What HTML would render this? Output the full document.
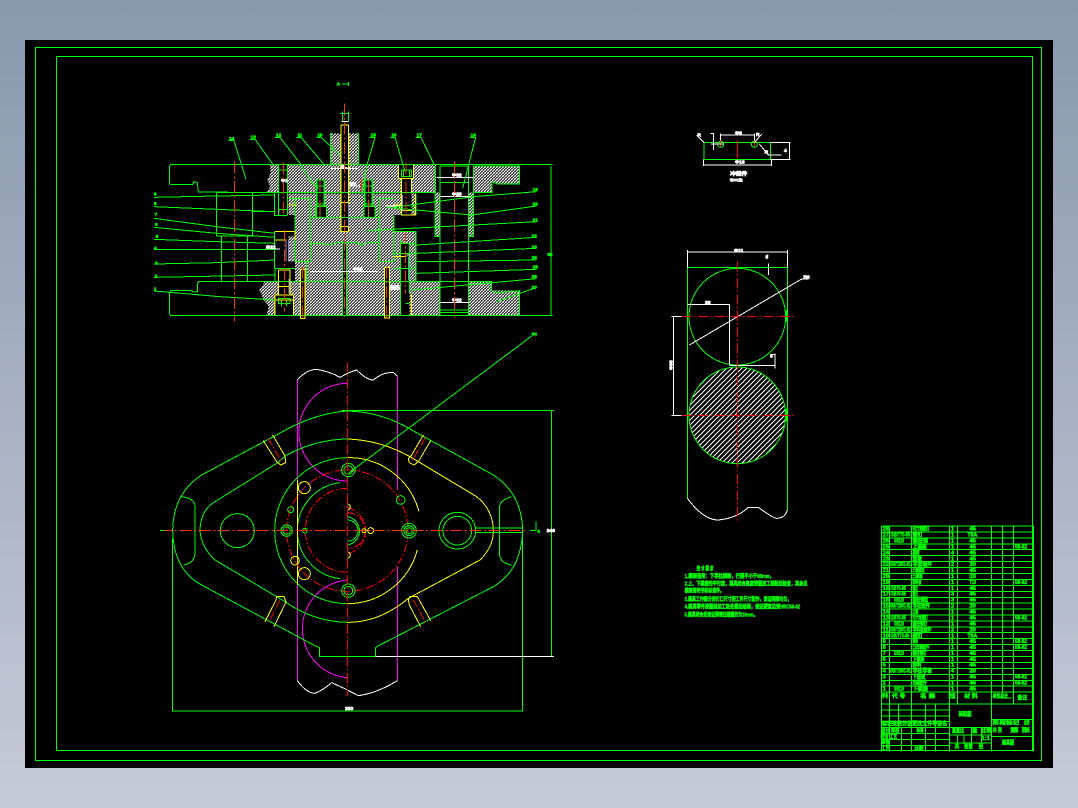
<!DOCTYPE html>
<html><head><meta charset="utf-8">
<style>
html,body{margin:0;padding:0;width:1078px;height:808px;overflow:hidden;background:linear-gradient(180deg,#8898ae 0%,#c6cad7 100%);}
svg{position:absolute;left:0;top:0;display:block}
text{font-family:"Liberation Sans","Noto Sans CJK SC",sans-serif;}
.g{fill:none;stroke:#0f0;stroke-width:3}
.y{fill:none;stroke:#ff0;stroke-width:3}
.w{fill:none;stroke:#fff;stroke-width:3}
.m{fill:none;stroke:#f0f;stroke-width:3}
.r{fill:none;stroke:#f30;stroke-width:3;stroke-dasharray:36 8 6 8}
.rr{fill:none;stroke:#f00;stroke-width:3;stroke-dasharray:24 6 5 6}
.bk{fill:#000;stroke:none}
.h{fill:url(#hx);stroke:none}
.lw{fill:#fff;stroke:#fff;stroke-width:2;font-size:15px;font-weight:bold}
.lg{fill:#0f0;stroke:#0f0;stroke-width:1.5;font-size:14px;font-weight:bold}
.tb text{fill:#0f0;stroke:#0f0;stroke-width:1.3;font-size:17px;font-weight:bold}
</style></head><body>
<svg width="1078" height="808" viewBox="0 0 1078 808" xmlns="http://www.w3.org/2000/svg" shape-rendering="crispEdges">
<defs>
<pattern id="hx" patternUnits="userSpaceOnUse" width="9" height="9">
<rect width="9" height="9" fill="#000"/>
<path d="M-1 10L10 -1M-1 1L1 -1M8 10L10 8" stroke="#fff" stroke-width="3"/>
<path d="M0 0L9 9" stroke="#fff" stroke-width="1.5"/>
</pattern>
<pattern id="hd" patternUnits="userSpaceOnUse" width="15" height="15">
<rect width="15" height="15" fill="#000"/>
<path d="M-1 16L16 -1M-1 1L1 -1M14 16L16 14" stroke="#fff" stroke-width="3"/>
</pattern>
</defs>
<rect x="25" y="40" width="1028" height="728" fill="#000"/>
<rect x="35.5" y="47.5" width="1006" height="713" fill="none" stroke="#0f0"/>
<rect x="56.5" y="56.5" width="976" height="694" fill="none" stroke="#0f0"/>

<!-- SECTION VIEW -->
<g transform="translate(140 80) scale(.33333)">
<path class="h" d="M390 255L415 255 415 338 378 338 390 320 382 298 392 280Z"/>
<path class="h" d="M443 255L572 255 572 338 443 338Z"/>
<path class="h" d="M572 168Q572 160 580 160L648 160Q655 160 655 168L655 338 572 338Z"/>
<path class="h" d="M655 255L775 255 775 295 785 295 785 338 655 338Z"/>
<path class="h" d="M820 255L888 255 888 338 815 338 815 295 820 295Z"/>
<path class="h" d="M1000 258L1138 258 1138 312 1072 312 1056 305 1056 338 1000 338Z"/>
<path class="h" d="M885 338L900 338 900 470 885 470ZM985 338L1000 338 1000 470 985 470Z"/>
<path class="h" d="M445 340L828 340 828 405 762 405 762 545 465 545 465 405 445 405Z"/>
<path class="h" d="M358 630L375 605 900 605 900 705 380 705 386 680 372 660Z"/>
<path class="h" d="M985 605L1055 605 1055 632 1070 632 1138 632 1138 705 985 705Z"/>
<path class="h" d="M465 545L828 545 828 605 465 605ZM762 455L828 455 828 545 762 545Z"/>
<path class="h" d="M445 470L465 470 465 545 445 545Z"/>
<!-- holes -->
<rect class="bk" x="415" y="255" width="28" height="150"/>
<rect class="bk" x="405" y="340" width="40" height="65"/>
<rect class="bk" x="603" y="95" width="23" height="360"/>
<rect class="bk" x="530" y="298" width="23" height="80"/>
<rect class="bk" x="674" y="298" width="23" height="80"/>
<rect class="bk" x="785" y="295" width="30" height="110"/>
<rect class="bk" x="775" y="255" width="45" height="40"/>
<rect class="bk" x="415" y="570" width="35" height="135"/>
<rect class="bk" x="405" y="645" width="55" height="60"/>
<rect class="bk" x="420" y="470" width="25" height="95"/>
<rect class="bk" x="482" y="568" width="13" height="148"/>
<rect class="bk" x="733" y="562" width="15" height="152"/>
<rect class="bk" x="782" y="490" width="26" height="215"/>
<rect class="bk" x="608" y="490" width="10" height="215"/>
<rect class="bk" x="527" y="380" width="33" height="32"/>
<rect class="bk" x="672" y="380" width="33" height="32"/>
<!-- outlines -->
<path class="g" d="M1238 253L95 253Q88 255 88 265L88 308Q90 314 95 314L158 314 162 305 172 308 175 336 405 338"/>
<path class="g" d="M405 605L178 604 172 610 172 635 160 636 155 632 92 632 88 640 88 700 92 707 1238 707"/>
<path class="g" d="M229 338H338V468H229ZM244 468V604M323 468V604M338 395H405"/>
<path class="g" d="M572 160V255M655 160V255M572 160H578M650 160H655M405 338H888M1000 338H1056V305L1072 312H1138V258M1000 258H1138"/>
<path class="g" stroke-width="4" d="M403 338V406H443M403 455V565M403 455H465M403 565H465M465 355V545H512V490M445 355H510M510 355V490M718 355V545H762V405M718 355H762M512 490H548L565 494 595 488 650 488 665 496 680 488 718 488M465 545H512M718 545H762"/>
<path class="g" d="M762 455H828V605H762M828 455V605M762 455V545M782 490H828M782 480V705M808 490V640M828 340V405M815 380H828M760 520H828"/>
<path class="g" d="M405 605H1000M985 605H1055V632L1070 638 1138 632V705M500 545V605M405 565V605M760 565H828"/>
<path class="g" d="M512 412H718M530 300H553V378H530ZM674 300H697V378H674ZM527 380H560V412H527ZM672 380H705V412H672ZM530 378V412M685 378V412M540 380V412M530 318H553M674 318H697"/>
<path class="g" stroke-width="5" d="M531 300V378M552 300V378M675 300V378M696 300V378M415 270H443M415 388H443M600 100H626M797 670H808M530 372H553M674 372H697"/>
<path class="g" d="M415 255V405M443 255V405"/>
<path class="g" d="M885 258V470H900M1000 258V470H985M900 258V705M985 258V705M900 258H985M900 307H985M900 690H985M900 697H985"/>
<path class="g" stroke-width="5" d="M900 258H985M808 580V640"/>
<path class="g" d="M785 270H815V290H785ZM790 270V290M808 270V290M415 655H450V670H415ZM425 658V680M440 658V680"/>
<path class="g" d="M608 95V125M626 95V125M620 490V705M607 490V705"/>
<!-- yellow -->
<path class="y" stroke-width="4" d="M603 135V455H626V135ZM603 368H626M605 440H624"/>
<path class="y" d="M415 570H450V645M415 570V645M415 620H450M405 645H460V705M405 645V705M405 660H460"/>
<path class="y" d="M405 455H465V480M405 480H440M445 375H470"/>
<path class="y" stroke-width="4" d="M482 568V716H495V568ZM733 562V714H748V562Z"/>
<path class="y" stroke-width="4" d="M775 255V295H820V255M785 295V405H827V340M785 392H815M815 295V340"/>
<path class="y" d="M815 640V705M760 375H785M760 530H800"/>
<path d="M438 480V545M445 480V545M447 595V640M625 370V440M787 345V395M806 530V600" fill="none" stroke="#88c" stroke-width="3"/>
<!-- white dims -->
<path class="w" d="M570 266H655M890 292H1000M900 350H990M900 668H988M510 575H715M375 507H420M800 525H810M625 318H660M735 378H785M750 628H780M604 125H626"/>
<path class="w" stroke-width="5" d="M606 262H622M906 350H914M978 350H988M902 668H914M976 668H988"/>
<text class="lw" x="936" y="290">Φ32</text><text class="lw" x="936" y="346">Φ28</text><text class="lw" x="936" y="664">Φ32</text>
<text class="lw" x="378" y="505">Φ22</text><text class="lw" x="639" y="572">Φ60</text><text class="lw" x="628" y="316">Φ7</text>
<text class="lw" x="423" y="306">Φ1</text><text class="lw" x="750" y="625">Φ25</text><text class="lw" x="603" y="264">Φ</text>
<!-- leaders -->
<path class="g" d="M42 352L230 348 405 345M42 380L230 388 405 395M42 415L230 440 405 460M42 442L230 460 405 472M42 478L230 485 405 490M42 508H405M42 552L230 548 405 540M42 592L405 585M42 633L240 650 405 660"/>
<path class="g" d="M1190 335L1000 350 760 382M1190 378L995 405 740 382M1190 425L680 452M1190 472L830 495M1190 505L830 520M1190 540L830 545M1190 568L830 580M1190 596L815 630M1190 622L1070 665"/>
<path class="g" d="M265 182H282L318 298M330 178H345L400 255M405 172H420L480 250 510 300 535 325M470 172H483L552 253M530 172H543L600 225M688 172H705L680 258 665 345M752 172H765L795 275M826 172H843L882 253M990 172H1007L968 325"/>
<text class="lg" x="267" y="180">14</text><text class="lg" x="332" y="176">13</text><text class="lg" x="408" y="170">12</text><text class="lg" x="472" y="170">11</text><text class="lg" x="532" y="170">10</text><text class="lg" x="692" y="170">15</text><text class="lg" x="754" y="170">16</text><text class="lg" x="830" y="170">17</text><text class="lg" x="992" y="170">18</text>
<text class="lg" x="42" y="347">9</text><text class="lg" x="42" y="375">8</text><text class="lg" x="44" y="408">7</text><text class="lg" x="45" y="438">6</text><text class="lg" x="47" y="474">5</text><text class="lg" x="42" y="508">4</text><text class="lg" x="45" y="553">3</text><text class="lg" x="44" y="592">2</text><text class="lg" x="42" y="632">1</text>
<text class="lg" x="1178" y="333">19</text><text class="lg" x="1178" y="376">20</text><text class="lg" x="1178" y="424">21</text><text class="lg" x="1175" y="472">22</text><text class="lg" x="1175" y="505">23</text><text class="lg" x="1175" y="537">24</text><text class="lg" x="1178" y="565">25</text><text class="lg" x="1175" y="594">26</text><text class="lg" x="1175" y="627">27</text>
<path class="g" d="M1233 258V705"/><text class="lg" x="1222" y="528">86</text>
<text class="lg" x="590" y="16">A</text><path class="g" d="M605 12H626M626 6V18"/>
<!-- centerlines -->
<path class="r" d="M283 245V725M430 248V410M433 450V695M613 70V710M685 300V415M540 300V415M798 248V410M797 455V640M740 560V720M488 560V718M943 245V712"/>
<path class="r" d="M665 298V340"/>
</g>

<!-- PLAN VIEW -->
<g transform="translate(160 330) scale(.33333)">
<path class="m" d="M412 150V1052M712 138V480M712 710V1052"/>
<path class="m" d="M562 160A145 146 0 0 0 562 453"/>
<path class="m" d="M562 750A147 147 0 0 0 562 1043"/>
<path class="w" d="M412 150Q440 118 470 118Q510 125 540 142Q570 125 590 120Q620 150 640 150Q670 125 700 128L712 138"/>
<path class="w" d="M412 1052Q440 1090 465 1090Q490 1080 515 1058Q555 1075 595 1097Q650 1090 712 1052"/>
<path class="g" d="M125 435L355 312Q460 250 562 243Q665 245 755 300L1000 435Q1085 490 1088 600Q1085 720 1000 770L650 950 646 955V980H478V952L470 950 125 765Q40 720 38 600Q40 490 125 435Z"/>
<path class="g" d="M350 400L165 515Q122 540 120 600Q122 650 165 690L375 815Q460 875 562 877M350 400L380 375Q470 328 562 327"/>
<path class="y" d="M562 327Q660 330 750 380L950 500Q1000 540 1000 605Q1000 650 960 690L745 805Q660 877 562 877"/>
<path class="g" d="M65 500Q105 505 105 530V670Q103 700 70 705M1055 500Q1018 510 1018 535V670Q1020 700 1055 705"/>
<circle class="g" cx="232" cy="602" r="51"/>
<circle class="g" cx="892" cy="602" r="55"/><circle class="g" cx="892" cy="602" r="43"/>
<path class="g" d="M562 383A218 219 0 0 0 562 821M540 458A145 145 0 0 0 540 746"/>
<path class="y" d="M562 383A218 218 0 0 1 777 545M772 660A218 218 0 0 1 562 821"/>
<path class="y" d="M412 450V765"/>
<circle class="rr" cx="562" cy="602" r="182"/>
<path class="rr" d="M562 475A125 125 0 0 0 562 727M562 532A72 72 0 0 1 562 672M562 548A54 54 0 0 1 562 656"/>
<path class="g" d="M562 560A43 43 0 0 1 562 645M562 570A32 32 0 0 1 562 634"/>
<path class="y" stroke-width="5" d="M338 315L375 378M310 332L350 395M790 315L752 380M812 332L775 395M315 875L348 810M342 890L375 822M782 890L748 825M812 872L775 805"/>
<path class="y" d="M350 395L362 405 377 398 375 378M752 380L745 385 748 398 762 405 775 395M348 810L350 800 372 800 378 815 375 822M748 825L745 808 750 800 772 800 778 810"/>
<path class="rr" d="M325 325L365 395M795 325L755 395M360 810L325 880M760 810L798 880"/>
<circle class="y" stroke-width="4" cx="433" cy="473" r="18"/><circle class="y" stroke-width="4" cx="405" cy="692" r="13"/><circle class="y" stroke-width="4" cx="433" cy="731" r="18"/>
<circle class="g" stroke-width="4" cx="392" cy="539" r="9"/><circle class="g" stroke-width="4" cx="722" cy="510" r="13"/><circle class="g" stroke-width="4" cx="435" cy="602" r="7"/>
<circle class="g" stroke-width="4" cx="380" cy="602" r="17"/><circle class="g" cx="380" cy="602" r="11"/>
<circle class="g" stroke-width="4" cx="747" cy="602" r="22"/><circle class="g" cx="747" cy="602" r="15"/><circle class="g" cx="747" cy="602" r="9"/>
<circle class="g" stroke-width="4" cx="565" cy="420" r="20"/><circle class="g" cx="565" cy="420" r="13"/><circle class="g" stroke-width="4" cx="565" cy="782" r="20"/><circle class="g" cx="565" cy="782" r="13"/>
<circle class="y" stroke-width="4" cx="612" cy="602" r="6"/><circle class="y" stroke-width="4" cx="632" cy="602" r="9"/>
<path class="y" stroke-width="4" d="M562 522A9 9 0 0 1 562 540M562 666A9 9 0 0 1 562 684"/>
<path class="g" d="M945 594H1088M945 608H1088M38 625V1145M1088 610V1145M38 1143H1088M545 242H1182M1175 242V978"/>
<path class="w" d="M646 980H1182"/>
<path class="g" d="M565 430L1115 18"/>
<path class="r" d="M0 602H1100"/>
<path d="M562 98V1100" fill="none" stroke="#f00" stroke-width="3" stroke-dasharray="30 7 5 7"/>
<path class="g" d="M0 602H14M1110 602H1128V575"/>
<text class="lg" x="1115" y="16">34</text>
<text class="lw" x="1132" y="607" style="font-size:11px;fill:#0f0;stroke:#0f0">A</text>
<text class="lw" x="1160" y="606">240</text>
<text class="lw" x="555" y="1140">350</text>
</g>

<!-- RIGHT VIEWS -->
<g transform="translate(660 120) scale(.33333)">
<path class="g" stroke-width="7" d="M132 68H332M132 68V118M332 68V118"/>
<path class="g" d="M132 118H332"/>
<circle class="g" stroke-width="2" cx="283" cy="73" r="9"/><circle class="g" stroke-width="2" cx="182" cy="73" r="9"/>
<path d="M182 60V80M283 60V80M232 62V115" fill="none" stroke="#f00" stroke-width="3"/>
<path class="w" d="M130 118V138M335 118V138M130 135H335M182 40V62M283 40V62M182 45H283M332 68H392M332 118H392M388 68V118M160 40V90M152 40H162M110 45L132 68M305 42L283 68M298 72L325 105H365M153 72H190"/>
<text class="lw" x="225" y="44">Φ8</text><text class="lw" x="225" y="130">Φ16</text><text class="lw" x="372" y="96">4</text>
<text class="lw" x="112" y="50">R</text><text class="lw" x="288" y="48">R</text><text class="lw" x="314" y="100">R</text>
<text class="lw" x="210" y="167" textLength="52" lengthAdjust="spacingAndGlyphs">冲裁件</text><text class="lw" x="210" y="185" textLength="38" lengthAdjust="spacingAndGlyphs">t=2</text>
<path class="g" d="M82 390V1135M382 442V1170M82 442H382"/>
<path class="g" stroke-width="5" d="M205 443H262M380 570V605M380 865V905M213 737H265"/>
<circle class="g" cx="232" cy="590" r="145"/>
<circle cx="232" cy="886" r="145" fill="url(#hd)" stroke="#0f0" stroke-width="3"/>
<path class="w" d="M88 675L425 477H445M82 553H208V735M82 396H382M82 390V442M382 390V442M320 405H326M326 430V465"/>
<path class="w" stroke-width="5" d="M208 737H345"/>
<path class="w" d="M345 700V745M330 703H345M40 590V886M35 590H65M35 886H65"/>
<path class="w" d="M82 1135Q130 1200 175 1200Q230 1195 265 1162L295 1162Q340 1195 350 1195Q375 1195 382 1170"/>
<text class="lw" x="222" y="396">Φ11</text><text class="lw" x="430" y="475">R6</text><text class="lw" x="135" y="552">38</text>
<text class="lw" x="316" y="415">3</text><text class="lw" x="330" y="712">3</text>
<text class="lw" transform="translate(37 750) rotate(-90)">Φ98</text>
<path d="M65 590H402M65 886H402" fill="none" stroke="#f00" stroke-width="3" stroke-dasharray="30 7 5 7"/>
<path d="M232 425V1208" fill="none" stroke="#f00" stroke-width="3" stroke-dasharray="30 7 5 7"/>
</g>

<!-- NOTES -->
<g class="tb" transform="translate(670 555) scale(.33333)">
<text x="80" y="47" textLength="50" lengthAdjust="spacingAndGlyphs">技 术 要 求</text>
<text x="44" y="69" textLength="268" lengthAdjust="spacingAndGlyphs">1.模架选用：下导柱模架，行程不小于80mm，</text>
<text x="44" y="91" textLength="368" lengthAdjust="spacingAndGlyphs">2.上、下模座的平行度，模具闭合高度按图加工装配后检查，其余见</text>
<text x="44" y="113" textLength="118" lengthAdjust="spacingAndGlyphs">模架说明书和标准件。</text>
<text x="44" y="138" textLength="320" lengthAdjust="spacingAndGlyphs">3.模具工作部分的刃口尺寸按工件尺寸配作，保证间隙均匀，</text>
<text x="44" y="160" textLength="346" lengthAdjust="spacingAndGlyphs">4.模具零件按图纸加工热处理后组装，保证硬度达到HRC58-62</text>
<text x="44" y="184" textLength="218" lengthAdjust="spacingAndGlyphs">5.模具闭合后保证弹簧压缩量约为10mm。</text>
</g>

<!-- TITLE BLOCK -->
<g class="tb" transform="translate(870 520) scale(.33333)">
<path class="g" d="M34 18V694M490 18V694M34 18H490M34 36H490M34 54H490M34 72H490M34 89H490M34 107H490M34 125H490M34 143H490M34 161H490M34 178H490M34 196H490M34 214H490M34 232H490M34 249H490M34 267H490M34 285H490M34 303H490M34 321H490M34 338H490M34 356H490M34 374H490M34 392H490M34 409H490M34 427H490M34 445H490M34 463H490M34 481H490M34 498H490M34 516H490M34 552H490"/>
<path class="g" d="M58 18V552M125 18V552M238 18V694M262 18V552M364 18V694M397 18V516M430 18V552"/>
<path class="g" d="M34 570H238M34 588H238M34 605H238M34 623H364M34 640H238M34 658H238M34 676H238M58 552V694M85 552V623M125 552V623M166 552V623M196 552V623M95 623V694M125 623V694M166 623V694M196 623V694M238 645H364M238 669H364M262 645V669M282 645V669M304 623V669M334 623V669M364 598H490M364 649H490M380 534H425"/>
<text x="38" y="32">28</text><text x="128" y="32" textLength="50" lengthAdjust="spacingAndGlyphs">内六角螺钉</text><text x="243" y="32">1</text><text x="298" y="32" textLength="20" lengthAdjust="spacingAndGlyphs">45</text>
<text x="38" y="50">27</text><text x="62" y="50" textLength="58" lengthAdjust="spacingAndGlyphs">GB/T70-85</text><text x="128" y="50" textLength="30" lengthAdjust="spacingAndGlyphs">螺钉</text><text x="243" y="50">1</text><text x="292" y="50" textLength="30" lengthAdjust="spacingAndGlyphs">T8A</text>
<text x="38" y="67">26</text><text x="72" y="67" textLength="30" lengthAdjust="spacingAndGlyphs">GB119</text><text x="128" y="67" textLength="46" lengthAdjust="spacingAndGlyphs">圆柱销</text><text x="243" y="67">1</text><text x="298" y="67" textLength="20" lengthAdjust="spacingAndGlyphs">45</text>
<text x="38" y="85">25</text><text x="128" y="85" textLength="42" lengthAdjust="spacingAndGlyphs">上模座</text><text x="243" y="85">1</text><text x="298" y="85" textLength="20" lengthAdjust="spacingAndGlyphs">45</text><text x="435" y="85" textLength="36" lengthAdjust="spacingAndGlyphs">58-62</text>
<text x="38" y="103">24</text><text x="128" y="103" textLength="20" lengthAdjust="spacingAndGlyphs">模柄</text><text x="243" y="103">4</text><text x="298" y="103" textLength="20" lengthAdjust="spacingAndGlyphs">45</text>
<text x="38" y="121">23</text><text x="128" y="121" textLength="28" lengthAdjust="spacingAndGlyphs">垫板</text><text x="243" y="121">1</text><text x="298" y="121" textLength="20" lengthAdjust="spacingAndGlyphs">45</text>
<text x="38" y="138">22</text><text x="60" y="138" textLength="62" lengthAdjust="spacingAndGlyphs">GB/T2861-81</text><text x="128" y="138" textLength="58" lengthAdjust="spacingAndGlyphs">导套组件</text><text x="243" y="138">2</text><text x="298" y="138" textLength="20" lengthAdjust="spacingAndGlyphs">20</text>
<text x="38" y="156">21</text><text x="128" y="156" textLength="36" lengthAdjust="spacingAndGlyphs">凸模固定</text><text x="243" y="156">1</text><text x="298" y="156" textLength="20" lengthAdjust="spacingAndGlyphs">45</text>
<text x="38" y="174">20</text><text x="128" y="174" textLength="30" lengthAdjust="spacingAndGlyphs">凸模板</text><text x="243" y="174">1</text><text x="298" y="174" textLength="20" lengthAdjust="spacingAndGlyphs">Q35</text>
<text x="38" y="192">19</text><text x="128" y="192" textLength="26" lengthAdjust="spacingAndGlyphs">卸料板</text><text x="243" y="192">1</text><text x="298" y="192" textLength="20" lengthAdjust="spacingAndGlyphs">T10</text><text x="435" y="192" textLength="36" lengthAdjust="spacingAndGlyphs">58-62</text>
<text x="38" y="210">18</text><text x="62" y="210" textLength="46" lengthAdjust="spacingAndGlyphs">GB70-85</text><text x="128" y="210" textLength="16" lengthAdjust="spacingAndGlyphs">螺钉</text><text x="243" y="210">1</text><text x="298" y="210" textLength="20" lengthAdjust="spacingAndGlyphs">45</text>
<text x="38" y="227">17</text><text x="62" y="227" textLength="46" lengthAdjust="spacingAndGlyphs">GB70-85</text><text x="128" y="227" textLength="16" lengthAdjust="spacingAndGlyphs">螺钉</text><text x="243" y="227">3</text><text x="298" y="227" textLength="20" lengthAdjust="spacingAndGlyphs">45</text>
<text x="38" y="245">16</text><text x="72" y="245" textLength="30" lengthAdjust="spacingAndGlyphs">GB119</text><text x="128" y="245" textLength="46" lengthAdjust="spacingAndGlyphs">圆柱销组</text><text x="243" y="245">3</text><text x="298" y="245" textLength="20" lengthAdjust="spacingAndGlyphs">45</text>
<text x="38" y="263">15</text><text x="60" y="263" textLength="62" lengthAdjust="spacingAndGlyphs">GB/T2861-81</text><text x="128" y="263" textLength="52" lengthAdjust="spacingAndGlyphs">导柱组件</text><text x="243" y="263">2</text><text x="298" y="263" textLength="20" lengthAdjust="spacingAndGlyphs">20</text>
<text x="38" y="281">14</text><text x="128" y="281" textLength="16" lengthAdjust="spacingAndGlyphs">凸模</text><text x="243" y="281">1</text><text x="298" y="281" textLength="20" lengthAdjust="spacingAndGlyphs">45</text>
<text x="38" y="298">13</text><text x="62" y="298" textLength="46" lengthAdjust="spacingAndGlyphs">GB70-85</text><text x="128" y="298" textLength="46" lengthAdjust="spacingAndGlyphs">内六角螺钉</text><text x="243" y="298">1</text><text x="298" y="298" textLength="20" lengthAdjust="spacingAndGlyphs">45</text><text x="435" y="298" textLength="36" lengthAdjust="spacingAndGlyphs">58-62</text>
<text x="38" y="316">12</text><text x="72" y="316" textLength="30" lengthAdjust="spacingAndGlyphs">GB119</text><text x="128" y="316" textLength="44" lengthAdjust="spacingAndGlyphs">圆柱销钉</text><text x="243" y="316">1</text><text x="298" y="316" textLength="20" lengthAdjust="spacingAndGlyphs">45</text>
<text x="38" y="334">11</text><text x="60" y="334" textLength="62" lengthAdjust="spacingAndGlyphs">GB/T2861-81</text><text x="128" y="334" textLength="56" lengthAdjust="spacingAndGlyphs">导料板组件</text><text x="243" y="334">2</text><text x="298" y="334" textLength="20" lengthAdjust="spacingAndGlyphs">20</text>
<text x="38" y="352">10</text><text x="62" y="352" textLength="56" lengthAdjust="spacingAndGlyphs">GB/T70-85</text><text x="128" y="352" textLength="30" lengthAdjust="spacingAndGlyphs">螺钉</text><text x="243" y="352">1</text><text x="292" y="352" textLength="30" lengthAdjust="spacingAndGlyphs">T8A</text>
<text x="38" y="369">9</text><text x="128" y="369" textLength="16" lengthAdjust="spacingAndGlyphs">挡料</text><text x="243" y="369">1</text><text x="298" y="369" textLength="20" lengthAdjust="spacingAndGlyphs">45</text><text x="435" y="369" textLength="36" lengthAdjust="spacingAndGlyphs">58-62</text>
<text x="38" y="387">8</text><text x="128" y="387" textLength="50" lengthAdjust="spacingAndGlyphs">凸凹模组件</text><text x="243" y="387">1</text><text x="298" y="387" textLength="20" lengthAdjust="spacingAndGlyphs">45</text><text x="435" y="387" textLength="36" lengthAdjust="spacingAndGlyphs">58-62</text>
<text x="38" y="405">7</text><text x="72" y="405" textLength="30" lengthAdjust="spacingAndGlyphs">GB119</text><text x="128" y="405" textLength="42" lengthAdjust="spacingAndGlyphs">圆柱销钉</text><text x="243" y="405">1</text><text x="298" y="405" textLength="20" lengthAdjust="spacingAndGlyphs">45</text>
<text x="38" y="423">6</text><text x="128" y="423" textLength="36" lengthAdjust="spacingAndGlyphs">下模板</text><text x="243" y="423">1</text><text x="298" y="423" textLength="20" lengthAdjust="spacingAndGlyphs">45</text>
<text x="38" y="440">5</text><text x="128" y="440" textLength="26" lengthAdjust="spacingAndGlyphs">卸料</text><text x="243" y="440">1</text><text x="298" y="440" textLength="20" lengthAdjust="spacingAndGlyphs">45</text>
<text x="38" y="458">4</text><text x="60" y="458" textLength="62" lengthAdjust="spacingAndGlyphs">GB/T2861-81</text><text x="128" y="458" textLength="58" lengthAdjust="spacingAndGlyphs">导柱导套</text><text x="243" y="458">4</text><text x="298" y="458" textLength="20" lengthAdjust="spacingAndGlyphs">20</text>
<text x="38" y="476">3</text><text x="128" y="476" textLength="38" lengthAdjust="spacingAndGlyphs">下垫板</text><text x="243" y="476">1</text><text x="298" y="476" textLength="20" lengthAdjust="spacingAndGlyphs">45</text><text x="435" y="476" textLength="36" lengthAdjust="spacingAndGlyphs">58-62</text>
<text x="38" y="494">2</text><text x="128" y="494" textLength="42" lengthAdjust="spacingAndGlyphs">凹模组件</text><text x="243" y="494">1</text><text x="298" y="494" textLength="20" lengthAdjust="spacingAndGlyphs">45</text><text x="435" y="494" textLength="36" lengthAdjust="spacingAndGlyphs">58-62</text>
<text x="38" y="511">1</text><text x="72" y="511" textLength="30" lengthAdjust="spacingAndGlyphs">GB119</text><text x="128" y="511" textLength="46" lengthAdjust="spacingAndGlyphs">下模座</text><text x="243" y="511">1</text><text x="298" y="511" textLength="20" lengthAdjust="spacingAndGlyphs">45</text>
<text x="36" y="534" textLength="18" lengthAdjust="spacingAndGlyphs">序号</text><text x="66" y="534" textLength="40" lengthAdjust="spacingAndGlyphs">代 号</text><text x="150" y="534" textLength="46" lengthAdjust="spacingAndGlyphs">名 称</text><text x="236" y="534" textLength="20" lengthAdjust="spacingAndGlyphs">数量</text><text x="283" y="534" textLength="40" lengthAdjust="spacingAndGlyphs">材 料</text><text x="368" y="534" textLength="46" lengthAdjust="spacingAndGlyphs">单件总计</text><text x="442" y="538" textLength="30" lengthAdjust="spacingAndGlyphs">备注</text>
<text x="266" y="588" textLength="38" lengthAdjust="spacingAndGlyphs">装配图</text>
<text x="368" y="614" textLength="80" lengthAdjust="spacingAndGlyphs">阶段标记</text><text x="462" y="614" textLength="16" lengthAdjust="spacingAndGlyphs">比例</text>
<text x="368" y="636" textLength="28" lengthAdjust="spacingAndGlyphs">共 张</text><text x="420" y="636" textLength="60" lengthAdjust="spacingAndGlyphs">第 张</text>
<text x="396" y="674" textLength="36" lengthAdjust="spacingAndGlyphs">模具图</text>
<text x="36" y="616" textLength="196" lengthAdjust="spacingAndGlyphs">标记处数分区更改文件号签名</text>
<text x="34" y="638" textLength="54" lengthAdjust="spacingAndGlyphs">设计 审核</text><text x="140" y="636" textLength="20" lengthAdjust="spacingAndGlyphs">标准</text>
<text x="32" y="656" textLength="50" lengthAdjust="spacingAndGlyphs">校对 工艺</text><text x="34" y="672" textLength="24" lengthAdjust="spacingAndGlyphs">审核</text><text x="34" y="690" textLength="24" lengthAdjust="spacingAndGlyphs">工艺</text><text x="132" y="690" textLength="28" lengthAdjust="spacingAndGlyphs">日期</text>
<text x="246" y="638" textLength="36" lengthAdjust="spacingAndGlyphs">重量比</text><text x="306" y="638" textLength="16" lengthAdjust="spacingAndGlyphs">量</text><text x="335" y="638" textLength="28" lengthAdjust="spacingAndGlyphs">比例</text>
<text x="335" y="660" textLength="24" lengthAdjust="spacingAndGlyphs">1:1</text>
<text x="254" y="686" textLength="14" lengthAdjust="spacingAndGlyphs">共</text><text x="282" y="686" textLength="26" lengthAdjust="spacingAndGlyphs">张第</text><text x="326" y="686" textLength="14" lengthAdjust="spacingAndGlyphs">张</text>
</g>
</svg>
</body></html>
